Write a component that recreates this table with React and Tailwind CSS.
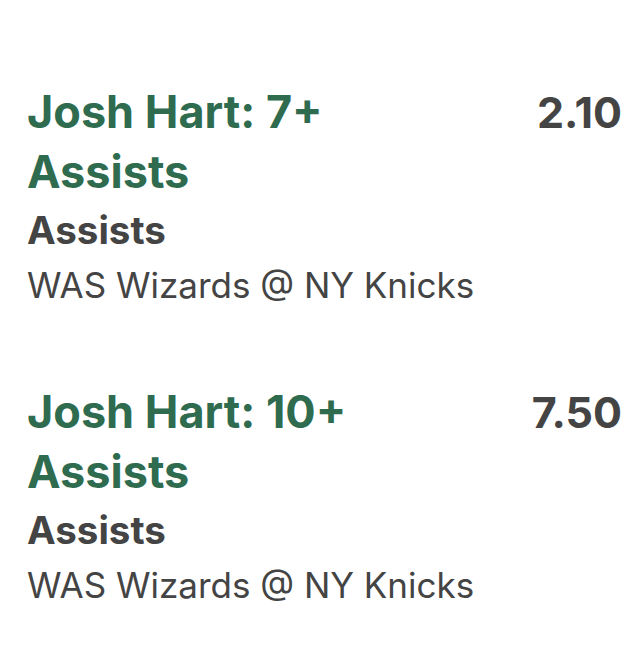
export default function App() {
  const items = [
    { title: "Josh Hart: 7+ Assists", price: "2.10" },
    { title: "Josh Hart: 10+ Assists", price: "7.50" },
  ];
  return (
    <div className="w-[644px] h-[646px] bg-white overflow-hidden" style={{ fontFamily: "Inter, Roboto, 'Liberation Sans', sans-serif" }}>
      <div className="pt-[82px] pl-[27px] pr-[22px] flex flex-col gap-[70px]">
        {items.map((it, i) => (
          <div key={i} className="flex justify-between items-start">
            <div className="flex flex-col w-[380px]">
              <div className="text-[45px] leading-[60px] font-bold text-[#2e6b4f]">{it.title}</div>
              <div className="text-[38.5px] leading-[56px] font-bold text-[#444444]">Assists</div>
              <div className="text-[35px] leading-[54px] text-[#444444] whitespace-nowrap">WAS Wizards @ NY Knicks</div>
            </div>
            <div className="text-[43px] leading-[60px] font-bold text-[#444444]">{it.price}</div>
          </div>
        ))}
      </div>
    </div>
  );
}
